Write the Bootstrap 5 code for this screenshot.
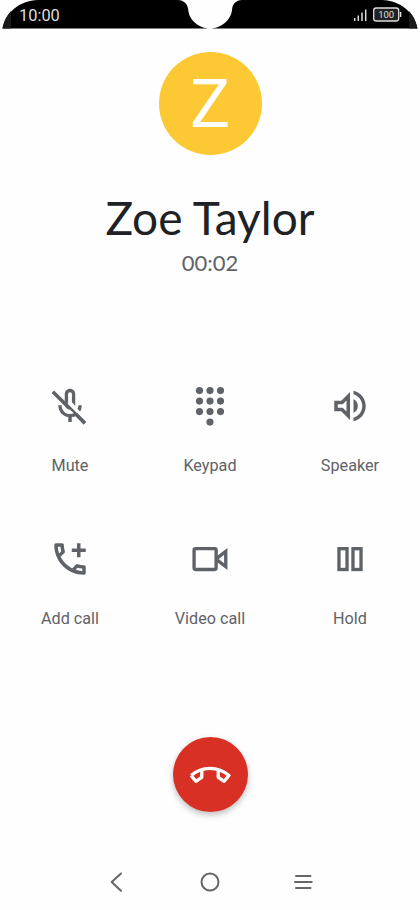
<!DOCTYPE html>
<html lang="en">

<head>
  <meta charset="UTF-8">
  <meta name="viewport" content="width=device-width, initial-scale=1">
  <title>Call</title>
  <link href="https://cdn.jsdelivr.net/npm/bootstrap@5.3.2/dist/css/bootstrap.min.css" rel="stylesheet">
  <style>
    body { font-family: Roboto, "Liberation Sans", sans-serif; background: #fefefe; }
    svg { display: block; flex: none; }
    .phone { width: 420px; height: 910px; overflow: hidden; }
    .status-bar { height: 29px; padding: 1px 18px 0 19px; color: #dedede; }
    .status-bar .clock { font-size: 16.4px; line-height: 29px; }
    .avatar { width: 103px; height: 103px; margin-top: 23px; padding-top: 2px; background: #fcc934; color: #fff; font-size: 67px; line-height: 1; }
    .caller { margin-top: 33px; font-family: Lato, sans-serif; font-size: 46px; line-height: 60px; color: #202124; }
    .timer { margin-top: 3px; font-family: Lato, sans-serif; font-size: 22px; line-height: 24px; color: #5f6368; }
    .actions { margin-top: 110px; row-gap: 62px; }
    .action { height: 91px; padding: 0; border: 0; background: none; color: #5f6368; font-size: 16.2px; line-height: 20px; }
    .action svg { width: 42px; height: 42px; fill: currentColor; }
    .hang-up { width: 75px; height: 75px; margin-top: 108px; padding: 0; border: 0; background: #d93025; box-shadow: 0 3px 6px rgba(0, 0, 0, .25); }
    .nav-keys { height: 56px; padding: 0 93px; }
    .nav-keys svg { fill: none; stroke: #666; stroke-width: 2; stroke-linecap: round; stroke-linejoin: round; }
  </style>
</head>

<body>
  <div class="phone d-flex flex-column align-items-center">

    <header class="status-bar position-relative w-100 d-flex justify-content-between">
      <!-- black bar with rounded screen corners and camera notch -->
      <svg class="position-absolute top-0 start-0" width="420" height="29" viewBox="0 0 420 29">
        <path fill="#000" d="M2.500 28.500C6 12 19 1 38 0H178C184 .5 187.500 3.500 188.300 10C189 20 199 28.500 210 28.500C221 28.500 231 20 232 10C232.500 3.500 236 .5 242 0H382C401 1 414 12 417.500 28.500Z" />
        <path fill="#1a1a1a" d="M2.500 28.500C4 21 6.500 16 11 11V28.500ZM417.500 28.500C416 21 413.500 16 409 11V28.500Z" />
      </svg>
      <span class="clock position-relative">10:00</span>
      <svg class="position-relative" width="50" height="28" viewBox="352 1 50 28">
        <path stroke="#dedede" stroke-width="1.500" d="M354.700 21V18M358.300 21V15.500M362 21V12.500M365.700 21V9.500" />
        <rect x="373.700" y="8" width="25" height="13" rx="2.500" fill="#222" stroke="#dedede" stroke-width="1.300" />
        <path stroke="#dedede" stroke-width="1.500" d="M400.600 12V17" />
        <text x="386.200" y="18" text-anchor="middle" font-size="9.500" fill="#dedede">100</text>
      </svg>
    </header>

    <div class="avatar rounded-circle d-flex align-items-center justify-content-center">Z</div>
    <div class="caller text-nowrap">Zoe Taylor</div>
    <div class="timer">00:02</div>

    <div class="actions row g-0 w-100">
      <button class="action col-4 d-flex flex-column align-items-center justify-content-between">
        <svg viewBox="0 0 24 24">
          <path d="M2.900 3.200L1.500 4.600L9.200 12.300C9.800 13.400 10.900 14.100 12 14.100L14.200 16.200C13.500 16.500 12.800 16.600 12 16.600C9.300 16.600 7.200 14.300 7.200 11.500H5.300C5.300 15 7.800 17.800 11 18.300V21.200H13V18.300C13.900 18.200 14.800 17.900 15.600 17.500L19.800 22.600L21.200 21.200Z" />
          <path d="M14.500 17.300L16 15.800L21.200 21.200L19.800 22.600Z" />
          <path d="M9 9.300V5.200C9 3.500 10.300 2.200 12 2.200S15 3.500 15 5.200V11.800L13.100 9.900V5.200C13.100 4.600 12.600 4.100 12 4.100S10.900 4.600 10.900 5.200V11.200Z" />
          <path d="M16.800 11.500H18.700C18.700 12.900 18.400 14.100 17.800 15.100L16.300 13.700C16.600 13 16.800 12.300 16.800 11.500Z" />
        </svg>
        <span>Mute</span>
      </button>
      <button class="action col-4 d-flex flex-column align-items-center justify-content-between">
        <svg viewBox="0 0 24 24">
          <g id="keyRow">
            <circle cx="6" cy="3.200" r="2.050" />
            <circle cx="12" cy="3.200" r="2.050" />
            <circle cx="18" cy="3.200" r="2.050" />
          </g>
          <use href="#keyRow" y="6" />
          <use href="#keyRow" y="12" />
          <circle cx="12" cy="21.200" r="2.050" />
        </svg>
        <span>Keypad</span>
      </button>
      <button class="action col-4 d-flex flex-column align-items-center justify-content-between">
        <svg viewBox="0 0 24 24">
          <path d="M3 9v6h4l5 5V4L7 9H3zm7-.17v6.340L7.830 13H5v-2h2.830L10 8.830zM16.500 12c0-1.770-1.020-3.290-2.500-4.030v8.050c1.480-.73 2.500-2.250 2.500-4.020zM14 3.230v2.060c2.890.86 5 3.540 5 6.710s-2.110 5.850-5 6.710v2.060c4.010-.91 7-4.490 7-8.770s-2.990-7.860-7-8.770z" />
        </svg>
        <span>Speaker</span>
      </button>
      <button class="action col-4 d-flex flex-column align-items-center justify-content-between">
        <svg viewBox="0 0 24 24">
          <path d="M20 15.500c-1.250 0-2.450-.2-3.570-.57-.1-.03-.21-.05-.31-.05-.26 0-.51.1-.71.29l-2.200 2.200c-2.830-1.440-5.150-3.750-6.590-6.590l2.200-2.210c.28-.26.36-.65.25-1C8.700 6.450 8.500 5.250 8.500 4c0-.55-.45-1-1-1H4c-.55 0-1 .45-1 1 0 9.390 7.610 17 17 17 .55 0 1-.45 1-1v-3.500c0-.55-.45-1-1-1zM5.030 5h1.500c.07.88.22 1.750.45 2.580l-1.200 1.210c-.4-1.210-.66-2.470-.75-3.790zM19 18.970c-1.320-.09-2.600-.35-3.800-.76l1.200-1.200c.85.24 1.720.39 2.600.45v1.510zM18 6V3h-2v3h-3v2h3v3h2V8h3V6h-3z" />
        </svg>
        <span>Add call</span>
      </button>
      <button class="action col-4 d-flex flex-column align-items-center justify-content-between">
        <svg viewBox="0 0 24 24">
          <g fill="none" stroke="currentColor" stroke-width="1.900">
            <rect x="2.900" y="6.100" width="12.600" height="11.900" rx=".8" />
            <path d="M16 11.500L21 7.700V16.300L16 12.500" />
          </g>
        </svg>
        <span>Video call</span>
      </button>
      <button class="action col-4 d-flex flex-column align-items-center justify-content-between">
        <svg viewBox="0 0 24 24">
          <g fill="none" stroke="currentColor" stroke-width="1.900">
            <rect x="5.700" y="6.100" width="4.600" height="11.900" />
            <rect x="13.700" y="6.100" width="4.600" height="11.900" />
          </g>
        </svg>
        <span>Hold</span>
      </button>
    </div>

    <button class="hang-up rounded-circle d-flex align-items-center justify-content-center" aria-label="End call">
      <svg width="42" height="42" viewBox="0 0 24 24" fill="none" stroke="#fff" stroke-width="1.900" stroke-linejoin="round">
        <path d="M1.200 12.300C7.200 6.800 16.800 6.800 22.800 12.300L20.100 15.600L16.700 13.300V9.300M1.200 12.300L3.900 15.600L7.300 13.300V9.300" />
      </svg>
    </button>

    <nav class="nav-keys w-100 mt-auto d-flex justify-content-between align-items-center">
      <svg width="46" height="24" viewBox="93 870 46 24"><path d="M121 873.500L111.700 882L121 890.800" /></svg>
      <svg width="24" height="24" viewBox="198 870 24 24"><circle cx="210" cy="882" r="8.500" /></svg>
      <svg width="46" height="24" viewBox="281 870 46 24"><path d="M296 876H310.500M295 882H311.700M296 888H310.500" /></svg>
    </nav>

  </div>
  <script src="https://cdn.jsdelivr.net/npm/bootstrap@5.3.2/dist/js/bootstrap.bundle.min.js"></script>
</body>

</html>
